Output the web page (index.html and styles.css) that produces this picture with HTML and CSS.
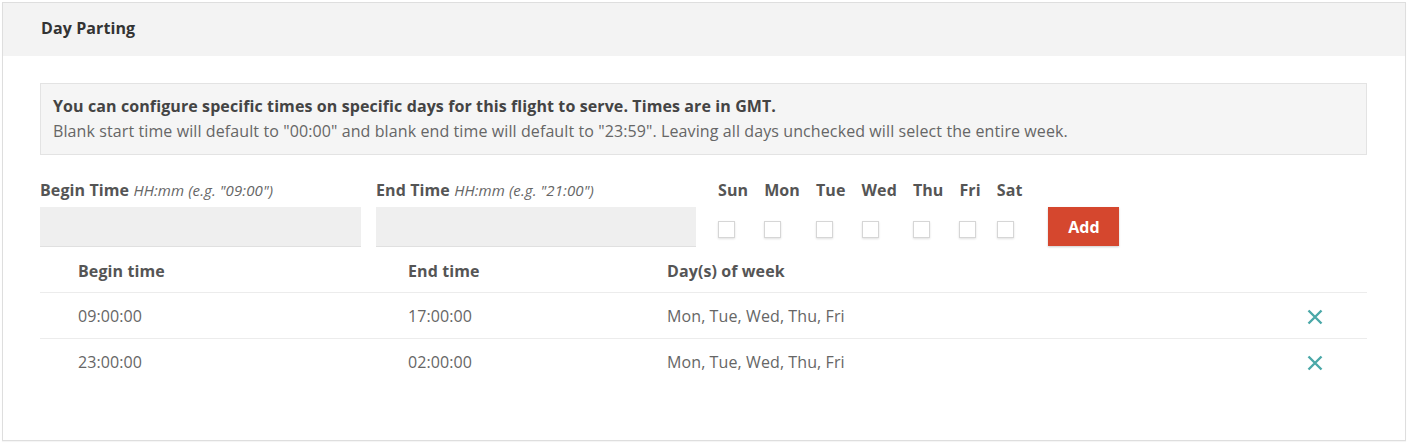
FILE: index.html
```html
<!DOCTYPE html>
<html lang="en">
<head>
<meta charset="utf-8">
<title>Day Parting</title>
<link rel="stylesheet" href="styles.css">
</head>
<body>
<section class="panel">
  <header class="panel-head">Day Parting</header>
  <div class="panel-body">
    <div class="info">
      <p class="info-strong">You can configure specific times on specific days for this flight to serve. Times are in GMT.</p>
      <p class="info-text">Blank start time will default to "00:00" and blank end time will default to "23:59". Leaving all days unchecked will select the entire week.</p>
    </div>
    <div class="form-row">
      <div class="field field-begin">
        <label class="label">Begin Time <em>HH:mm (e.g. "09:00")</em></label>
        <input class="input" type="text">
      </div>
      <div class="field field-end">
        <label class="label">End Time <em>HH:mm (e.g. "21:00")</em></label>
        <input class="input" type="text">
      </div>
      <div class="days">
        <div class="day"><span class="label">Sun</span><span class="check"></span></div>
        <div class="day"><span class="label">Mon</span><span class="check"></span></div>
        <div class="day"><span class="label">Tue</span><span class="check"></span></div>
        <div class="day"><span class="label">Wed</span><span class="check"></span></div>
        <div class="day"><span class="label">Thu</span><span class="check"></span></div>
        <div class="day"><span class="label">Fri</span><span class="check"></span></div>
        <div class="day"><span class="label">Sat</span><span class="check"></span></div>
      </div>
      <button class="btn-add" type="button">Add</button>
    </div>
    <div class="table">
      <div class="row row-head">
        <div class="cell">Begin time</div>
        <div class="cell">End time</div>
        <div class="cell">Day(s) of week</div>
        <div class="cell"></div>
      </div>
      <div class="row">
        <div class="cell">09:00:00</div>
        <div class="cell">17:00:00</div>
        <div class="cell">Mon, Tue, Wed, Thu, Fri</div>
        <div class="cell cell-action"><svg class="x" viewBox="0 0 16 16" width="16" height="16"><path d="M1.5 1.5L14.5 14.5M14.5 1.5L1.5 14.5" stroke="#4aa8a8" stroke-width="2.4" fill="none"/></svg></div>
      </div>
      <div class="row">
        <div class="cell">23:00:00</div>
        <div class="cell">02:00:00</div>
        <div class="cell">Mon, Tue, Wed, Thu, Fri</div>
        <div class="cell cell-action"><svg class="x" viewBox="0 0 16 16" width="16" height="16"><path d="M1.5 1.5L14.5 14.5M14.5 1.5L1.5 14.5" stroke="#4aa8a8" stroke-width="2.4" fill="none"/></svg></div>
      </div>
    </div>
  </div>
</section>
</body>
</html>
```
FILE: styles.css
```css
* { box-sizing: border-box; }
html, body { margin: 0; padding: 0; background: #fff; }
body {
  font-family: "Open Sans", "Liberation Sans", sans-serif;
  font-size: 16px;
  letter-spacing: 0.1px;
  color: #555;
  padding: 2px 4px 3px 2px;
}
.panel {
  border: 1px solid #dedede;
  background: #fff;
  height: 439px;
  box-shadow: 0 1px 1px rgba(0,0,0,0.04);
}
.panel-head {
  background: #f3f3f3;
  height: 53px;
  padding: 14px 38px 0;
  font-weight: 700;
  font-size: 16px;
  line-height: 22px;
  color: #333;
}
.panel-body {
  padding: 27px 38px 0 37px;
}
.info {
  background: #f5f5f5;
  border: 1px solid #e3e3e3;
  padding: 10px 12px 12px;
  height: 72px;
}
.info p { margin: 0; line-height: 25px; white-space: nowrap; }
.info-strong { font-weight: 700; color: #444; }
.info-text { color: #666; }
.form-row {
  display: flex;
  align-items: flex-end;
  margin-top: 25px;
}
.field { display: flex; flex-direction: column; }
.field-begin { width: 321px; }
.field-end { width: 320px; margin-left: 15px; }
.label {
  font-weight: 700;
  color: #555;
  line-height: 20px;
  white-space: nowrap;
}
.label em { font-weight: 400; font-style: italic; color: #666; font-size: 15px; }
.input {
  margin-top: 7px;
  height: 40px;
  border: 0;
  border-bottom: 1px solid #e0e0e0;
  background: #efefef;
  font: inherit;
}
.days {
  display: flex;
  gap: 16px;
  margin-left: 22px;
}
.day { display: flex; flex-direction: column; }
.check {
  display: block;
  width: 17px;
  height: 17px;
  margin-top: 21px;
  margin-bottom: 9px;
  border: 1px solid #d6d6d6;
  background: #fff;
  box-shadow: 0 1px 2px rgba(0,0,0,0.12);
}
.btn-add {
  margin-left: 26px;
  margin-bottom: 1px;
  width: 71px;
  height: 39px;
  border: 0;
  background: #d5472e;
  color: #fff;
  font: 700 16px "Open Sans", "Liberation Sans", sans-serif;
  box-shadow: 0 1px 2px rgba(0,0,0,0.2);
}
.row {
  display: grid;
  grid-template-columns: 330px 259px 1fr 60px;
  height: 46px;
  align-items: center;
  border-top: 1px solid #ececec;
  color: #666;
}
.row-head {
  border-top: 0;
  height: 45px;
  padding-top: 3px;
  font-weight: 700;
  color: #555;
}
.cell { padding-left: 38px; line-height: 20px; }
.cell-action { display: flex; padding-left: 0; }
.x { display: block; margin-top: 3px; }
```
